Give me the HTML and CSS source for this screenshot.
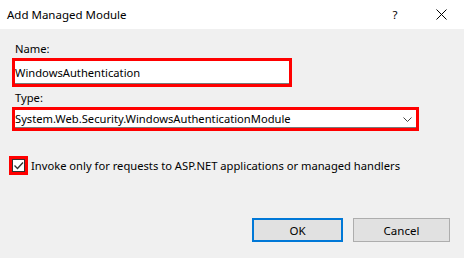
FILE: index.html
```html
<!DOCTYPE html>
<html lang="en">
<head>
    <meta charset="UTF-8">
    <title>Add Managed Module</title>
    <link rel="stylesheet" href="styles.css">
</head>
<body>

<div class="dialog">
    <div class="titlebar">
        <span class="title">Add Managed Module</span>
        <span class="help">?</span>
        <span class="close">
            <svg width="11" height="11" viewBox="0 0 11 11"><path d="M0.5 0.5 L10.5 10.5 M10.5 0.5 L0.5 10.5" stroke="#000" stroke-width="1" fill="none"/></svg>
        </span>
    </div>

    <div class="content">
        <div class="field">
            <label class="field-label" for="name">Name:</label>
            <div class="textbox mark">WindowsAuthentication</div>
        </div>

        <div class="field">
            <label class="field-label" for="type">Type:</label>
            <div class="combo mark">
                <span>System.Web.Security.WindowsAuthenticationModule</span>
                <svg class="chevron" width="9" height="5" viewBox="0 0 9 5"><path d="M0.5 0.5 L4.5 4.5 L8.5 0.5" stroke="#444" stroke-width="1" fill="none"/></svg>
            </div>
        </div>

        <div class="check-row">
            <span class="checkbox">
                <svg width="11" height="11" viewBox="0 0 11 11"><path d="M1.5 5.5 L4.5 8.5 L10 2.5" stroke="#333" stroke-width="1.4" fill="none"/></svg>
            </span>
            <span class="check-text">Invoke only for requests to ASP.NET applications or managed handlers</span>
        </div>

        <div class="buttons">
            <button class="btn btn-default">OK</button>
            <button class="btn">Cancel</button>
        </div>
    </div>
</div>

</body>
</html>
```

FILE: styles.css
```css
body {
    margin: 0;
    font-family: 'Noto Sans', 'Open Sans', sans-serif;
    font-size: 11.2px;
    color: #000;
    background-color: #f0f0f0;
}

.dialog {
    width: 464px;
    height: 258px;
    display: flex;
    flex-direction: column;
}

.titlebar {
    height: 29px;
    background-color: #fff;
    display: flex;
    align-items: center;
    padding-left: 7px;
    font-size: 11.5px;
}

.title {
    flex: 1;
}

.help {
    width: 46px;
    text-align: center;
}

.close {
    width: 46px;
    display: flex;
    justify-content: center;
}

.content {
    padding: 11px 0 0 12px;
    display: flex;
    flex-direction: column;
}

.field-label {
    display: block;
    padding-left: 3px;
    height: 18px;
    line-height: 18px;
}

.field {
    margin-bottom: 2px;
}

.mark {
    border: 3px solid #ff0000;
    background-color: #fff;
    box-sizing: border-box;
    box-shadow: inset 0 -1px 0 #7a7a7a;
}

.textbox {
    width: 280px;
    height: 29px;
    line-height: 23px;
}

.combo {
    width: 407px;
    height: 24px;
    line-height: 18px;
    display: flex;
    justify-content: space-between;
    align-items: center;
    padding-right: 4px;
}

.check-row {
    display: flex;
    align-items: center;
    margin-top: 23px;
    margin-left: -3px;
}

.checkbox {
    width: 13px;
    height: 13px;
    border: 3px solid #ff0000;
    display: flex;
    align-items: center;
    justify-content: center;
    background: #fff;
    box-shadow: inset 0 0 0 1px #333;
}

.check-text {
    margin-left: 3px;
}

.buttons {
    display: flex;
    justify-content: flex-end;
    gap: 10px;
    margin-top: 43px;
    padding-right: 14px;
}

.btn {
    font-family: inherit;
    font-size: 11.5px;
    width: 97px;
    height: 24px;
    background-color: #e1e1e1;
    border: 1px solid #adadad;
    padding: 0;
}

.btn-default {
    width: 91px;
    border: 2px solid #0078d7;
}
```
